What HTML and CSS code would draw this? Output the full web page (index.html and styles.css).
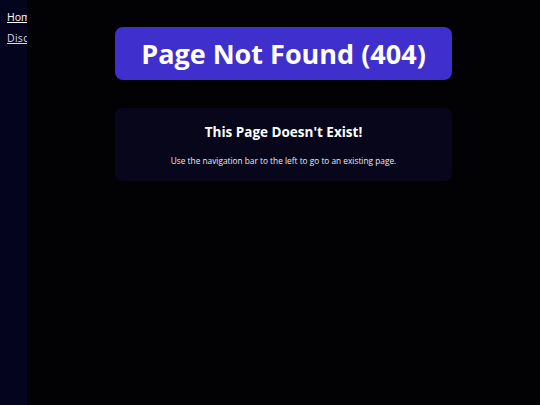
FILE: index.html
```html
<!DOCTYPE html>
<html>
<head>
<meta charset="utf-8">
<link rel="stylesheet" href="styles.css">
</head>
<body>
<div class="layout">
  <nav class="sidebar">
    <a class="nav-link" href="#">Home</a>
    <a class="nav-link dim" href="#">Discord</a>
  </nav>
  <main class="main">
    <div class="column">
      <h1 class="banner">Page Not Found (404)</h1>
      <section class="card">
        <h2 class="card-title">This Page Doesn't Exist!</h2>
        <p class="card-text">Use the navigation bar to the left to go to an existing page.</p>
      </section>
    </div>
  </main>
</div>
</body>
</html>
```
FILE: styles.css
```css
html, body {
  margin: 0;
  padding: 0;
  height: 100%;
  background: #020104;
  font-family: "Open Sans", "Noto Sans", sans-serif;
  color: #ffffff;
}
.layout {
  display: flex;
  height: 100%;
}
.sidebar {
  width: 27px;
  flex: none;
  background: #05041f;
  overflow: hidden;
  display: flex;
  flex-direction: column;
  gap: 6px;
  padding: 10px 0 0 7px;
  box-sizing: border-box;
  white-space: nowrap;
}
.nav-link {
  color: #ffffff;
  font-size: 10.5px;
  line-height: 15px;
  text-decoration: underline;
}
.nav-link.dim {
  color: #d8d8e4;
  letter-spacing: 0.3px;
}
.main {
  flex: 1;
  display: flex;
  justify-content: center;
  padding-top: 27px;
}
.column {
  width: 337px;
  display: flex;
  flex-direction: column;
  gap: 28px;
}
.banner {
  margin: 0;
  height: 53px;
  background: #3f2fcc;
  border-radius: 8px;
  display: flex;
  align-items: center;
  justify-content: center;
  font-size: 27px;
  font-weight: 700;
  color: #ffffff;
}
.card {
  background: #07061a;
  border-radius: 7px;
  height: 73px;
  box-sizing: border-box;
  padding-top: 14px;
  text-align: center;
}
.card-title {
  margin: 0;
  font-size: 13.5px;
  line-height: 20px;
  font-weight: 700;
}
.card-text {
  margin: 13px 0 0;
  font-size: 8.3px;
  line-height: 12px;
  color: #ececf2;
}
```
